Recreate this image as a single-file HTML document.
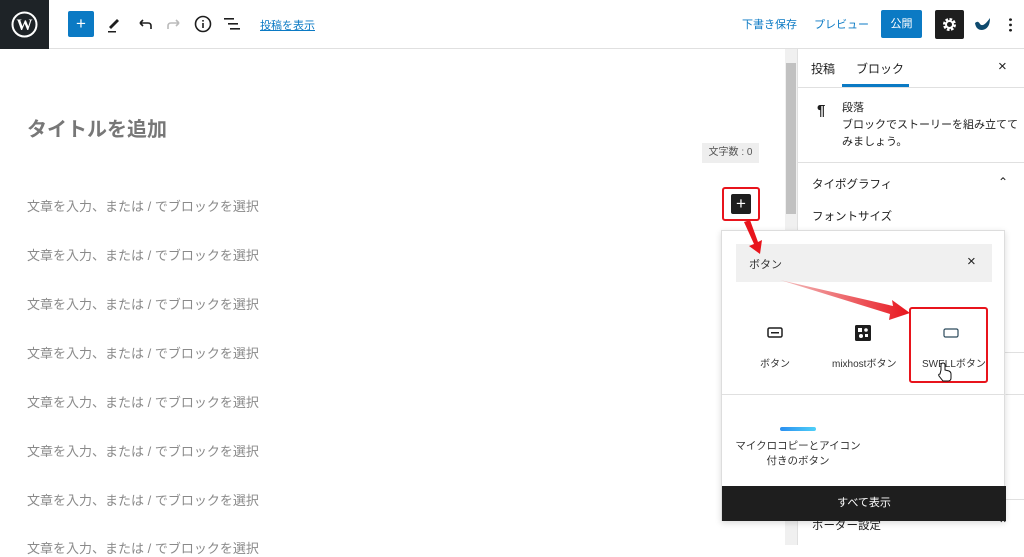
<!DOCTYPE html>
<html><head><meta charset="utf-8"><style>
*{box-sizing:border-box;margin:0;padding:0}
body{width:1024px;height:545px;overflow:hidden;background:#fff;font-family:"Liberation Sans","Noto Sans CJK JP",sans-serif;position:relative;color:#1e1e1e}
.abs{position:absolute}
.hdr{left:0;top:0;width:1024px;height:49px;border-bottom:1px solid #e0e0e0;background:#fff}
.wp{left:0;top:0;width:49px;height:49px;background:#1e2327}
.ph{left:27px;font-size:13px;color:#8a8a8a}
.sb{left:797px;top:49px;width:227px;height:496px;border-left:1px solid #e0e0e0;background:#fff}
.line{height:1px;background:#e0e0e0}
</style></head><body>
<div class="abs hdr"></div>
<div class="abs wp"><svg width="49" height="49" viewBox="0 0 49 49"><circle cx="24.5" cy="24.5" r="12" fill="none" stroke="#fff" stroke-width="2"/><text x="24.5" y="30" font-size="16" font-weight="bold" fill="#fff" text-anchor="middle" font-family="Liberation Serif">W</text></svg></div>
<div class="abs" style="left:68px;top:11px;width:26px;height:26px;background:#0b7ac4;border-radius:2px;color:#fff;font-size:17px;line-height:26px;text-align:center">+</div>
<svg class="abs" style="left:104px;top:14px" width="20" height="20"><path d="M5 13 L13 5 L15 7 L7 15 Z" fill="#1e1e1e"/><rect x="4" y="17" width="8" height="1.5" fill="#1e1e1e"/></svg>
<svg class="abs" style="left:136px;top:15px" width="18" height="18"><path d="M4 8 H12 Q15 8 15 11 V14 M4 8 L7 5 M4 8 L7 11" fill="none" stroke="#1e1e1e" stroke-width="1.6"/></svg>
<svg class="abs" style="left:165px;top:15px" width="18" height="18"><path d="M14 8 H6 Q3 8 3 11 V14 M14 8 L11 5 M14 8 L11 11" fill="none" stroke="#bbb" stroke-width="1.6"/></svg>
<svg class="abs" style="left:194px;top:15px" width="18" height="18"><circle cx="9" cy="9" r="7.5" fill="none" stroke="#1e1e1e" stroke-width="1.6"/><rect x="8.2" y="8" width="1.6" height="5" fill="#1e1e1e"/><rect x="8.2" y="5" width="1.6" height="1.6" fill="#1e1e1e"/></svg>
<svg class="abs" style="left:224px;top:16px" width="18" height="16"><rect x="0" y="2" width="10" height="1.6" fill="#1e1e1e"/><rect x="4" y="7" width="10" height="1.6" fill="#1e1e1e"/><rect x="6" y="12" width="10" height="1.6" fill="#1e1e1e"/></svg>
<div class="abs" style="left:260px;top:17px;font-size:11px;color:#0b7ac4;text-decoration:underline">投稿を表示</div>
<div class="abs" style="left:742px;top:16px;font-size:11px;color:#0b7ac4">下書き保存</div>
<div class="abs" style="left:814px;top:16px;font-size:11px;color:#0b7ac4">プレビュー</div>
<div class="abs" style="left:881px;top:10px;width:41px;height:28px;background:#0b7ac4;border-radius:2px;color:#fff;font-size:11px;line-height:28px;text-align:center">公開</div>
<div class="abs" style="left:935px;top:10px;width:29px;height:29px;background:#1e1e1e;border-radius:2px"><svg width="29" height="29"><circle cx="14.5" cy="14.5" r="5" fill="none" stroke="#fff" stroke-width="3" stroke-dasharray="2.5 1.4"/><circle cx="14.5" cy="14.5" r="3.5" fill="none" stroke="#fff" stroke-width="2"/></svg></div>
<svg class="abs" style="left:973px;top:16px" width="20" height="16"><path d="M2 7 Q5 4 7 8 Q10 12 17 2 Q17 13 9 14 Q3 14 2 7Z" fill="#0e4a6e"/></svg>
<div class="abs" style="left:1009px;top:17px;width:3px;height:16px;background:radial-gradient(circle,#1e1e1e 1.3px,transparent 1.5px) 0 0/3px 5.3px"></div>

<div class="abs" style="left:27px;top:113px;font-size:20px;color:#777;font-weight:bold">タイトルを追加</div>
<div class="abs" style="left:702px;top:143px;width:57px;height:20px;background:#eee;font-size:10px;line-height:20px;text-align:center;color:#555">文字数 : 0</div>
<div class="abs ph" style="top:196px">文章を入力、または / でブロックを選択</div>
<div class="abs ph" style="top:245px">文章を入力、または / でブロックを選択</div>
<div class="abs ph" style="top:294px">文章を入力、または / でブロックを選択</div>
<div class="abs ph" style="top:343px">文章を入力、または / でブロックを選択</div>
<div class="abs ph" style="top:392px">文章を入力、または / でブロックを選択</div>
<div class="abs ph" style="top:441px">文章を入力、または / でブロックを選択</div>
<div class="abs ph" style="top:490px">文章を入力、または / でブロックを選択</div>
<div class="abs ph" style="top:538px">文章を入力、または / でブロックを選択</div>

<div class="abs" style="left:785px;top:49px;width:12px;height:496px;background:#f0f0f0"></div>
<div class="abs" style="left:786px;top:63px;width:10px;height:151px;background:#c1c1c1"></div>

<div class="abs sb">
 <div class="abs" style="left:13px;top:11px;font-size:12px">投稿</div>
 <div class="abs" style="left:58px;top:11px;font-size:12px">ブロック</div>
 <div class="abs" style="left:44px;top:35px;width:67px;height:3px;background:#0b7ac4"></div>
 <div class="abs" style="left:200px;top:9px;font-size:15px">×</div>
 <div class="abs line" style="left:0;top:38px;width:227px"></div>
 <div class="abs" style="left:19px;top:53px;font-size:15px;font-weight:bold">¶</div>
 <div class="abs" style="left:44px;top:51px;font-size:11px;line-height:17px;width:183px">段落<br>ブロックでストーリーを組み立ててみましょう。</div>
 <div class="abs line" style="left:0;top:113px;width:227px"></div>
 <div class="abs" style="left:14px;top:127px;font-size:11.5px">タイポグラフィ</div>
 <div class="abs" style="left:200px;top:126px;font-size:12px">⌃</div>
 <div class="abs" style="left:14px;top:159px;font-size:11.5px">フォントサイズ</div>
 <div class="abs line" style="left:0;top:303px;width:227px"></div>
 <div class="abs line" style="left:0;top:345px;width:227px"></div>
 <div class="abs line" style="left:0;top:450px;width:227px"></div>
 <div class="abs" style="left:14px;top:468px;font-size:11.5px">ボーダー設定</div>
 <div class="abs" style="left:200px;top:468px;font-size:12px">⌃</div>
</div>

<div class="abs" style="left:721px;top:230px;width:284px;height:291px;background:#fff;border:1px solid #ddd;box-shadow:0 2px 6px rgba(0,0,0,.15)">
 <div class="abs" style="left:14px;top:13px;width:256px;height:38px;background:#f0f0f0"></div>
 <div class="abs" style="left:27px;top:25px;font-size:11px;color:#333">ボタン</div>
 <div class="abs" style="left:245px;top:22px;font-size:15px;color:#1e1e1e">×</div>
 <svg class="abs" style="left:45px;top:96px" width="16" height="12"><rect x="1" y="1" width="14" height="9" rx="1.5" fill="none" stroke="#1e1e1e" stroke-width="1.5"/><rect x="4" y="5" width="8" height="1.5" fill="#1e1e1e"/></svg>
 <div class="abs" style="left:38px;top:124px;font-size:10px;color:#333">ボタン</div>
 <svg class="abs" style="left:133px;top:94px" width="16" height="16"><rect width="16" height="16" rx="1.5" fill="#1e1e1e"/><rect x="3" y="3" width="4" height="4" fill="#fff"/><circle cx="11" cy="5" r="1.8" fill="#fff"/><circle cx="6" cy="11" r="2" fill="#fff"/><rect x="10" y="9" width="3" height="3" fill="#fff"/></svg>
 <div class="abs" style="left:110px;top:124px;font-size:10px;color:#333">mixhostボタン</div>
 <svg class="abs" style="left:221px;top:97px" width="16" height="11"><rect x="1" y="1" width="14" height="8" rx="1.5" fill="none" stroke="#2c4a5c" stroke-width="1.2"/></svg>
 <div class="abs" style="left:200px;top:124px;font-size:10px;color:#333">SWELLボタン</div>
 <div class="abs line" style="left:0;top:163px;width:284px"></div>
 <div class="abs" style="left:58px;top:196px;width:36px;height:4px;border-radius:2px;background:linear-gradient(90deg,#2a8ff0,#4fd0f8)"></div>
 <div class="abs" style="left:6px;top:208px;font-size:10.5px;color:#333;line-height:15px;text-align:center;width:140px">マイクロコピーとアイコン<br>付きのボタン</div>
 <div class="abs" style="left:0;top:255px;width:284px;height:35px;background:#1e1e1e;color:#fff;font-size:11px;line-height:35px;text-align:center">すべて表示</div>
</div>

<div class="abs" style="left:722px;top:187px;width:38px;height:34px;border:2px solid #e8141c;border-radius:3px"></div>
<div class="abs" style="left:731px;top:194px;width:20px;height:20px;background:#1e1e1e;color:#fff;font-size:17px;line-height:19px;text-align:center;border-radius:2px">+</div>
<div class="abs" style="left:909px;top:307px;width:79px;height:76px;border:2px solid #e8141c;border-radius:3px"></div>
<svg class="abs" style="left:0;top:0" width="1024" height="545">
 <defs><linearGradient id="g" x1="0" y1="0" x2="1" y2="0"><stop offset="0" stop-color="#f3c0c0"/><stop offset="1" stop-color="#e8141c"/></linearGradient></defs>
 <path d="M744 222 L754 244 L749 246 L760 254 L762 240 L758 242 L750 220Z" fill="#e8141c"/>
 <path d="M780 280 L893 306 L892 300 L910 313 L889 320 L890 314 Z" fill="url(#g)"/>
 <path d="M941 370 v-5 q0-2 2-2 q2 0 2 2 v5 l4 1 q2 1 2 3 v4 q0 3-3 3 h-5 l-4-5 q-1-2 1-2 z" fill="#fff" stroke="#111" stroke-width="1"/>
</svg>
</body></html>
